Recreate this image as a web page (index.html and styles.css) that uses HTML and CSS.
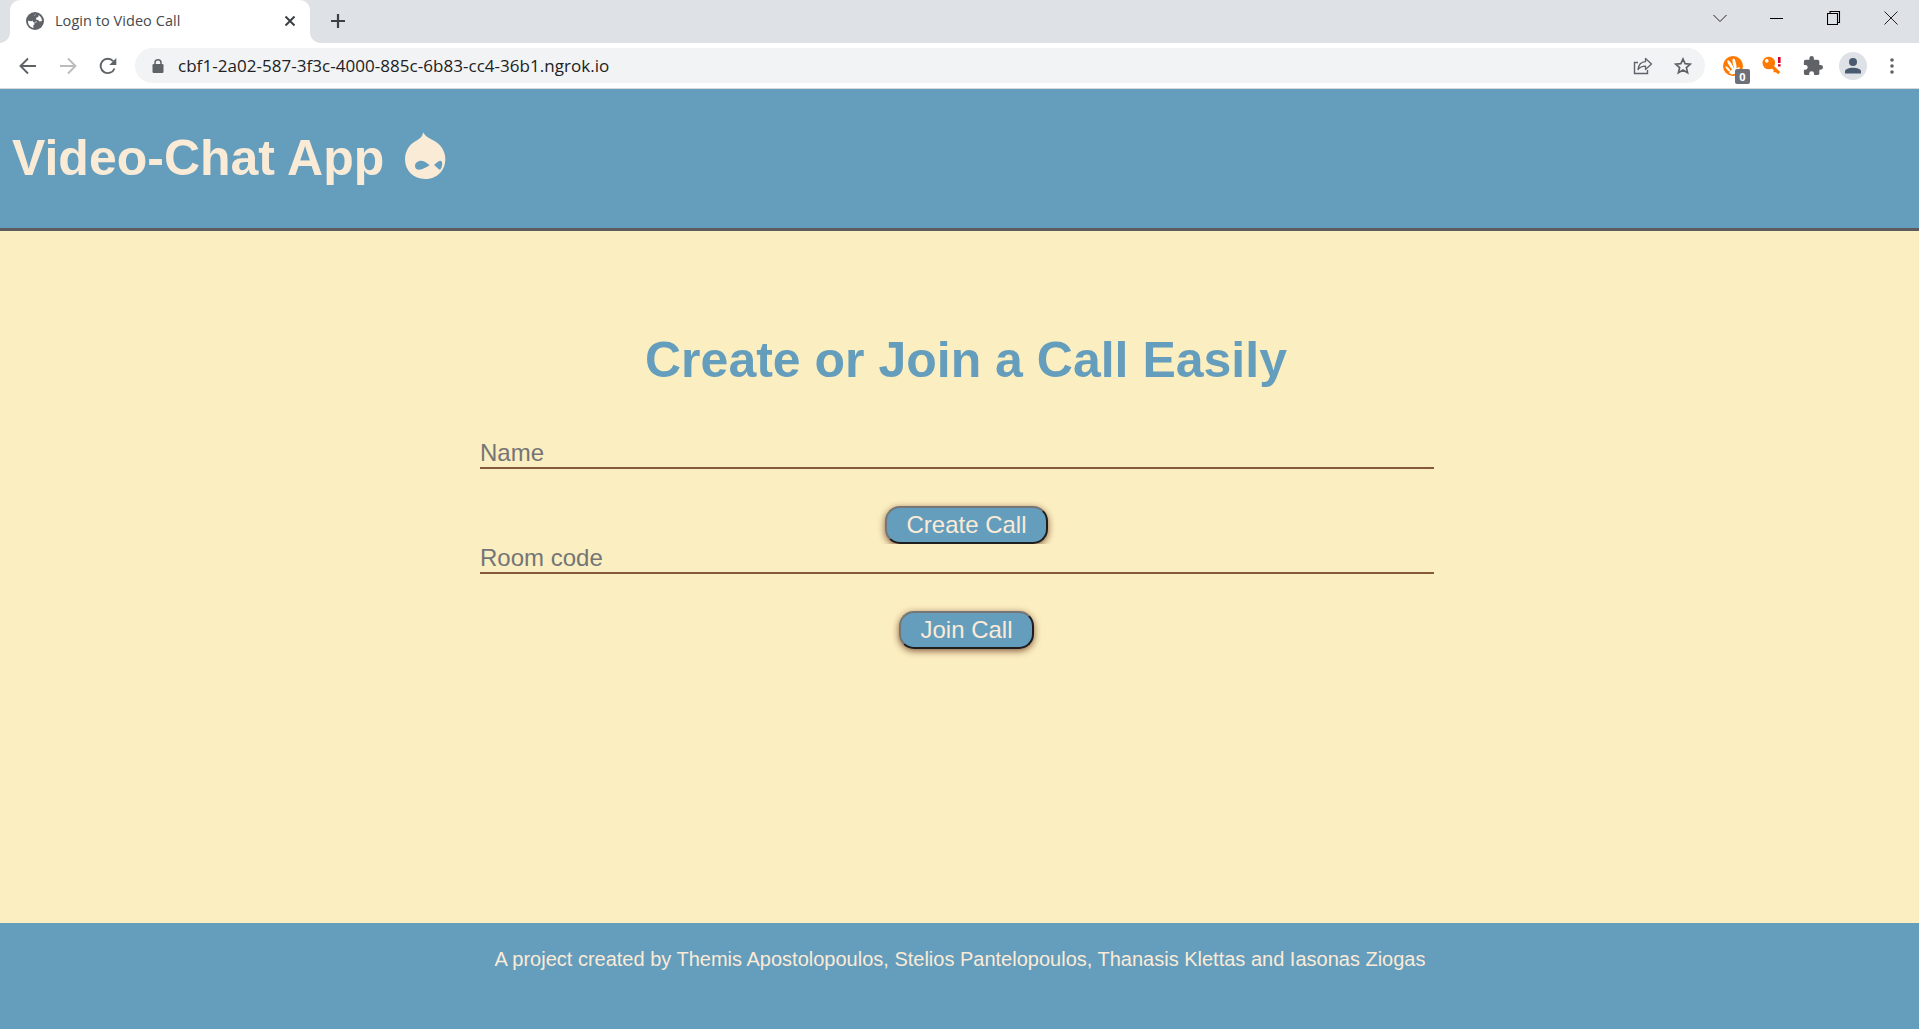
FILE: index.html
```html
<!DOCTYPE html>
<html lang="en">
<head>
<meta charset="utf-8">
<title>Login to Video Call</title>
<link rel="stylesheet" href="styles.css">
</head>
<body>
<div class="browser">
  <div class="tabstrip">
    <div class="tab">
      <svg class="globe" width="18" height="18" viewBox="0 0 18 18"><circle cx="9" cy="9" r="9" fill="#5f6368"/><path d="M9.800 2.100C9.600 3.300 8.400 3.400 7.600 3.700L7.400 5.300 5.400 6 5.200 7.600H8.600L10.400 9V10.600H8.400V12.400L7.400 13V15.900C4 15.400 2.100 12.600 2 9.600L2.300 8.800 5.600 9.200 6.600 8.400 7 10 8.400 10.600 10.400 9 8.600 7.600H5.200L5.400 6 7.400 5.300 7.600 3.700ZM12.600 3.100C14.800 4.500 15.900 6.600 16 9L13.600 9.400 12 8 10 7.400 10.400 5.600 12.400 5Z" fill="#fff"/></svg>
      <span class="tab-title">Login to Video Call</span>
      <svg class="tab-close" width="12" height="12" viewBox="0 0 12 12"><path d="M1.500 1.500 10.500 10.500M10.500 1.500 1.500 10.500" stroke="#3c4043" stroke-width="2"/></svg>
    </div>
    <svg class="new-tab" width="16" height="16" viewBox="0 0 16 16"><path d="M8 1V15M1 8H15" stroke="#3c4043" stroke-width="2.200"/></svg>
    <div class="window-controls">
      <svg width="14" height="14" viewBox="0 0 14 14"><path d="M.5 4 7 10.500 13.500 4" fill="none" stroke="#222"/></svg>
      <svg width="14" height="14" viewBox="0 0 14 14"><path d="M0 7.500H13" stroke="#000"/></svg>
      <svg width="14" height="14" viewBox="0 0 14 14"><path d="M.5 2.500H10.500V13.500H.5ZM3 2.500V.5H12.500V11.500H11" fill="none" stroke="#000" stroke-width="1.100"/></svg>
      <svg width="14" height="14" viewBox="0 0 14 14"><path d="M.5.5 13.500 13.500M13.500.5.5 13.500" stroke="#222"/></svg>
    </div>
  </div>
  <div class="toolbar">
    <div class="nav">
      <svg width="18" height="18" viewBox="0 0 18 18"><path d="M17 9H2M9 1.500 1.500 9 9 16.500" fill="none" stroke="#5f6368" stroke-width="1.900"/></svg>
      <svg width="18" height="18" viewBox="0 0 18 18"><path d="M1 9H16M9 1.500 16.500 9 9 16.500" fill="none" stroke="#babcbe" stroke-width="1.900"/></svg>
      <svg width="18" height="18" viewBox="0 0 18 18"><path d="M15.500 11.500A7.200 7.200 0 1 1 14.200 4.200" fill="none" stroke="#5f6368" stroke-width="1.900"/><path d="M17.300 1V8H10.300Z" fill="#5f6368"/></svg>
    </div>
    <div class="omnibox">
      <svg class="lock" width="12" height="14" viewBox="0 0 12 14"><path d="M3 6V3.800A3 3 0 0 1 9 3.800V6" fill="none" stroke="#5f6368" stroke-width="1.500"/><rect x=".5" y="5" width="11" height="9" rx="1.200" fill="#5f6368"/></svg>
      <span class="url">cbf1-2a02-587-3f3c-4000-885c-6b83-cc4-36b1.ngrok.io</span>
      <svg class="share" width="20" height="18" viewBox="0 0 20 18"><path d="M5 5.500H1.500V16.500H14.500V13" fill="none" stroke="#5f6368" stroke-width="1.400"/><path d="M12.500 1.500 18.500 7 12.500 12.500V9.200C9 9.200 7 10 5 12.500 5.500 8 8 5 12.500 4.700Z" fill="none" stroke="#5f6368" stroke-width="1.300" stroke-linejoin="round"/></svg>
      <svg class="star" width="18" height="18" viewBox="0 0 18 18"><path d="M9 2 11.100 6.700 16.300 7.200 12.400 10.600 13.600 15.800 9 13 4.400 15.800 5.600 10.600 1.700 7.200 6.900 6.700Z" fill="none" stroke="#5f6368" stroke-width="1.700"/></svg>
    </div>
    <div class="extensions">
      <div class="ext">
        <svg width="20" height="20" viewBox="0 0 20 20"><circle cx="10" cy="10" r="10" fill="#ff7800"/><g fill="#fff"><ellipse cx="5" cy="13" rx="1.100" ry="3.600" transform="rotate(-42 5 13)"/><ellipse cx="7.600" cy="9" rx="1.500" ry="5.600" transform="rotate(-32 7.600 9)"/><ellipse cx="11.500" cy="7.800" rx="1.600" ry="5.400" transform="rotate(-12 11.500 7.800)"/><path d="M6 17C8 14 10 11.500 12 12.500L17 11 15 17 9 18.500Z"/></g></svg>
        <span class="badge">0</span>
      </div>
      <svg class="key" width="20" height="20" viewBox="0 0 20 20"><path d="M9 9.500 17.200 17.200" stroke="#ff7800" stroke-width="3.200"/><path d="M12 16 14 14" stroke="#ff7800" stroke-width="2.400"/><circle cx="6.800" cy="7" r="6.300" fill="#ff7800"/><circle cx="4.800" cy="4.900" r="1.800" fill="#fff"/><path d="M17.300 1V7M17.300 8.300V10.500" stroke="#d8002c" stroke-width="2.600"/></svg>
      <svg class="puzzle" width="20" height="20" viewBox="1 1 22 22"><path fill="#5f6368" d="M20.500 11H19V7c0-1.100-.9-2-2-2h-4V3.500a2.500 2.500 0 0 0-5 0V5H4c-1.100 0-2 .9-2 2v3.800h1.500a2.700 2.700 0 0 1 0 5.400H2V20c0 1.100.9 2 2 2h3.800v-1.500a2.700 2.700 0 0 1 5.400 0V22H17c1.100 0 2-.9 2-2v-4h1.500a2.500 2.500 0 0 0 0-5z"/></svg>
      <svg class="avatar" width="28" height="28" viewBox="0 0 28 28"><circle cx="14" cy="14" r="14" fill="#dee1e6"/><circle cx="14" cy="10" r="4" fill="#4a5a70"/><path d="M6 21.500V19.500C6 14.500 22 14.500 22 19.500V21.500Z" fill="#4a5a70"/></svg>
      <svg class="dots" width="4" height="16" viewBox="0 0 4 16"><g fill="#5f6368"><circle cx="2" cy="2" r="1.800"/><circle cx="2" cy="8" r="1.800"/><circle cx="2" cy="14" r="1.800"/></g></svg>
    </div>
  </div>
</div>
<header class="site-header">
  <h1>Video-Chat App</h1>
  <svg class="logo" width="42" height="48" viewBox="0 0 126 144"><path fill="#faebd7" fill-rule="evenodd" d="M57 1C65 15 78 20 95 29 113 40 124 60 124 80 124 117 98 141 63 141 29 141 3 117 3 82 3 58 16 38 34 28 46 21 56 15 57 1ZM52 86C41 86 33 93 33 102 33 109 38 113 45 113 57 113 67 105 77 100 69 94 62 86 52 86ZM90 99C97 92 105 86 110 86 115 88 115 94 114 100 113 107 111 113 107 113 103 111 97 104 90 99Z"/></svg>
</header>
<main class="content">
  <h2>Create or Join a Call Easily</h2>
  <form class="call-form">
    <div class="create-group">
      <input class="field" type="text" placeholder="Name">
      <button class="action" type="button">Create Call</button>
    </div>
    <input class="field" type="text" placeholder="Room code">
    <button class="action" type="button">Join Call</button>
  </form>
</main>
<footer class="site-footer">A project created by Themis Apostolopoulos, Stelios Pantelopoulos, Thanasis Klettas and Iasonas Ziogas</footer>
</body>
</html>
```
FILE: styles.css
```css
* { box-sizing: border-box; }
body {
  margin: 0;
  height: 1029px;
  display: flex;
  flex-direction: column;
  overflow: hidden;
  background: #fbeec1;
  font-family: "Liberation Sans", Arial, sans-serif;
}
svg { display: block; flex: none; }
.browser { height: 89px; background: #fff; border-bottom: 1px solid #d5d7da; font-family: "Open Sans", "Noto Sans", sans-serif; }
.tabstrip { display: flex; height: 43px; background: #dee1e6; }
.tab {
  position: relative;
  display: flex;
  align-items: center;
  width: 300px;
  margin-left: 10px;
  padding: 0 14px 1px 16px;
  background: #fff;
  border-radius: 10px 10px 0 0;
}
.tab::before, .tab::after {
  content: "";
  position: absolute;
  bottom: 0;
  width: 10px;
  height: 10px;
}
.tab::before { left: -10px; background: radial-gradient(circle at 0 0, transparent 9.5px, #fff 10px); }
.tab::after { right: -10px; background: radial-gradient(circle at 100% 0, transparent 9.5px, #fff 10px); }
.tab-title { margin-left: 11px; font-size: 14.5px; line-height: 20px; color: #45494d; white-space: nowrap; letter-spacing: .05px; }
.tab-close { margin-left: auto; }
.new-tab { margin: 13px 0 0 20px; }
.window-controls { display: flex; gap: 43px; margin: 11px 21px 0 auto; }
.toolbar { display: flex; align-items: center; height: 45px; }
.nav { display: flex; gap: 22px; margin-left: 19px; }
.omnibox { display: flex; align-items: center; width: 1570px; height: 35px; margin-left: 18px; padding: 0 13px 0 17px; border-radius: 18px; background: #f1f3f4; }
.url { margin-left: 14px; font-size: 17px; line-height: 24px; letter-spacing: .04px; color: #202124; white-space: nowrap; }
.share { margin-left: auto; }
.star { margin-left: 21px; }
.extensions { display: flex; align-items: center; margin-left: 18px; }
.ext { position: relative; }
.badge { position: absolute; left: 12px; top: 13px; width: 15px; height: 15px; border-radius: 2px; background: #6e7079; color: #fff; font-size: 11px; font-weight: 700; line-height: 15px; text-align: center; }
.key { margin-left: 19px; }
.puzzle { margin-left: 21px; }
.avatar { margin-left: 16px; }
.dots { margin-left: 23px; }
.site-header { display: flex; align-items: flex-start; height: 142px; padding: 41px 12px 0; border-bottom: 3px solid #5c5c5c; background: #659dbd; }
h1 { margin: 0; font-size: 50px; line-height: 57px; color: #faebd7; }
.logo { margin: 2px 0 0 20px; }
.content { flex: 1; display: flex; flex-direction: column; padding-top: 101px; }
h2 { margin: 0 0 50px; padding-left: 13px; font-size: 50px; line-height: 57px; text-align: center; color: #659dbd; }
.call-form { display: flex; flex-direction: column; width: 973px; margin-left: 480px; }
.create-group { display: flex; flex-direction: column; overflow: hidden; }
.field { width: 954px; height: 30px; margin: 0 0 37px; padding: 0 0 1px; border: 0; border-bottom: 2px solid #855a3c; background: transparent; font: 24px "Liberation Sans", Arial, sans-serif; }
.field::placeholder { color: #757575; }
.action {
  align-self: center;
  height: 38px;
  padding: 0 19.5px;
  border: 2px solid;
  border-color: #767676 #1e1e1e #1e1e1e #767676;
  border-radius: 15px;
  background: #659dbd;
  color: #faebd7;
  font: 24px "Liberation Sans", Arial, sans-serif;
  box-shadow: 0 2px 7px #855a3c;
}
.site-footer { height: 106px; padding-top: 25px; padding-left: 1px; background: #659dbd; color: #faebd7; font-size: 20px; line-height: 23px; text-align: center; }
```
